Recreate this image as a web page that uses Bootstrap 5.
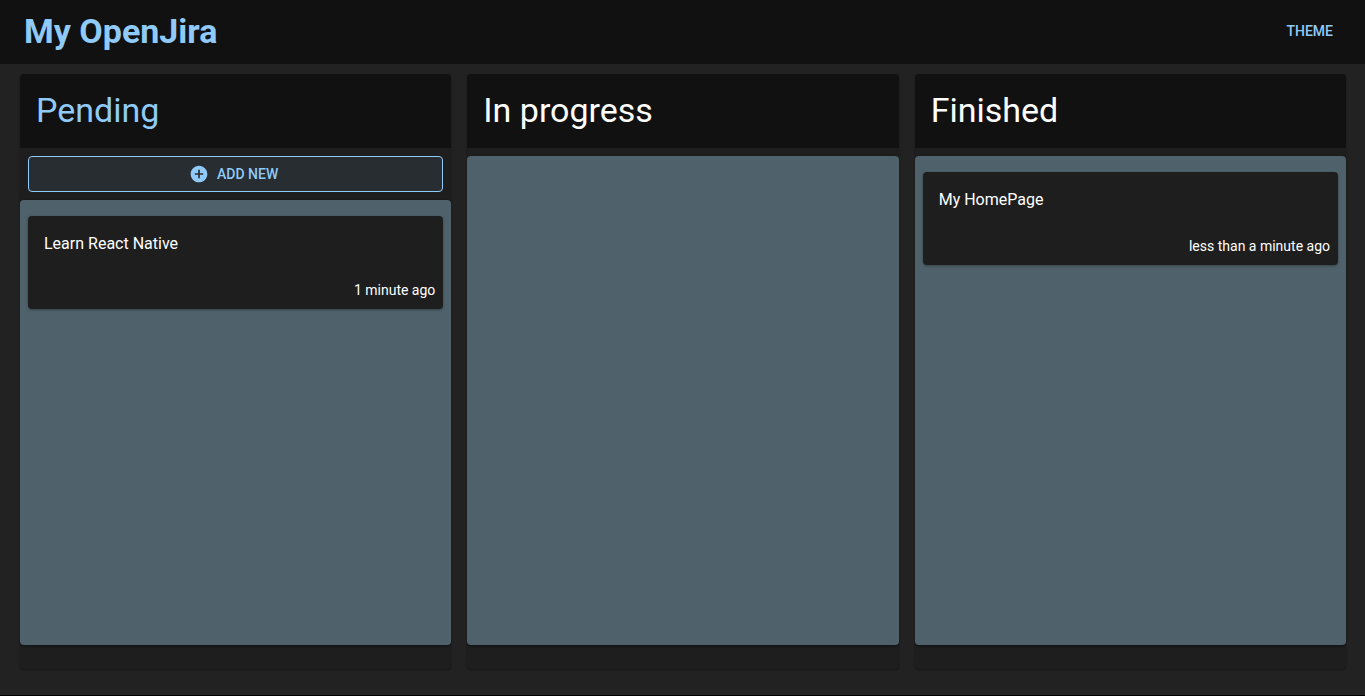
<!DOCTYPE html>
<html lang="en" data-bs-theme="dark">
<head>
<meta charset="utf-8">
<meta name="viewport" content="width=device-width, initial-scale=1">
<title>My OpenJira</title>
<link href="https://cdn.jsdelivr.net/npm/bootstrap@5.3.0/dist/css/bootstrap.min.css" rel="stylesheet">
<style>
  :root { --accent: #90caf9; --bar: #111; --paper: #1e1e1e; --lane: #4f626b; }
  body { font-family: Roboto, "Liberation Sans", sans-serif; background: #222; color: #fff; }
  .app { border-bottom: 1px solid #000; }
  .topbar { background: var(--bar); height: 64px; padding: 0 24px 2px; }
  .accent { color: var(--accent); }
  .heading { font-size: 34px; line-height: 40px; font-weight: 400; }
  .app-name { font-weight: 700; }
  .action { --bs-btn-color: var(--accent); --bs-btn-hover-color: var(--accent); --bs-btn-border-radius: 4px;
    font-size: 14px; line-height: 24px; font-weight: 500; padding: 5px 7px; }
  .action-outline { --bs-btn-border-color: var(--accent); --bs-btn-hover-border-color: var(--accent);
    --bs-btn-bg: #272d31; --bs-btn-hover-bg: #2b343a; margin: 8px 8px 0; }
  .action-outline svg { margin-left: -4px; }
  .board { display: grid; grid-template-columns: repeat(3, 1fr); gap: 16px; padding: 10px 19px 26px 20px; }
  .lane-col { background: var(--paper); border-radius: 4px; padding-bottom: 24px; overflow: hidden;
    box-shadow: 0 1px 2px rgba(0, 0, 0, .4); }
  .lane-head { background: var(--bar); padding: 16px 16px 18px; }
  .lane-list { background: var(--lane); border-radius: 4px; margin-top: 8px; padding: 16px 8px;
    box-shadow: 0 1px 3px rgba(0, 0, 0, .5); }
  .entry { --bs-card-bg: var(--paper); --bs-card-border-width: 0; --bs-card-border-radius: 4px;
    --bs-card-color: #fff; box-shadow: 0 1px 3px rgba(0, 0, 0, .35); }
  .entry-text { font-size: 16px; line-height: 24px; padding: 16px; }
  .entry-time { font-size: 14px; line-height: 20px; padding: 8px 8px 9px; }
  @media (max-width: 700px) { .board { grid-template-columns: 1fr; } }
</style>
</head>
<body>
<div class="app d-flex flex-column min-vh-100">
  <header class="topbar d-flex align-items-center justify-content-between">
    <h1 class="heading app-name accent mb-0">My OpenJira</h1>
    <button type="button" class="btn action">THEME</button>
  </header>
  <main class="board flex-grow-1">
    <section class="lane-col d-flex flex-column">
      <div class="lane-head"><h2 class="heading accent mb-0">Pending</h2></div>
      <button type="button" class="btn action action-outline d-flex align-items-center justify-content-center gap-2">
        <svg width="20" height="20" viewBox="0 0 24 24" fill="currentColor" aria-hidden="true"><path d="M12 2C6.48 2 2 6.48 2 12s4.480 10 10 10 10-4.480 10-10S17.520 2 12 2zm5 11h-4v4h-2v-4H7v-2h4V7h2v4h4v2z"/></svg>
        ADD NEW
      </button>
      <div class="lane-list flex-grow-1">
        <article class="card entry">
          <div class="entry-text">Learn React Native</div>
          <div class="entry-time text-end">1 minute ago</div>
        </article>
      </div>
    </section>
    <section class="lane-col d-flex flex-column">
      <div class="lane-head"><h2 class="heading mb-0">In progress</h2></div>
      <div class="lane-list flex-grow-1"></div>
    </section>
    <section class="lane-col d-flex flex-column">
      <div class="lane-head"><h2 class="heading mb-0">Finished</h2></div>
      <div class="lane-list flex-grow-1">
        <article class="card entry">
          <div class="entry-text">My HomePage</div>
          <div class="entry-time text-end">less than a minute ago</div>
        </article>
      </div>
    </section>
  </main>
</div>
<script src="https://cdn.jsdelivr.net/npm/bootstrap@5.3.0/dist/js/bootstrap.bundle.min.js"></script>
</body>
</html>
